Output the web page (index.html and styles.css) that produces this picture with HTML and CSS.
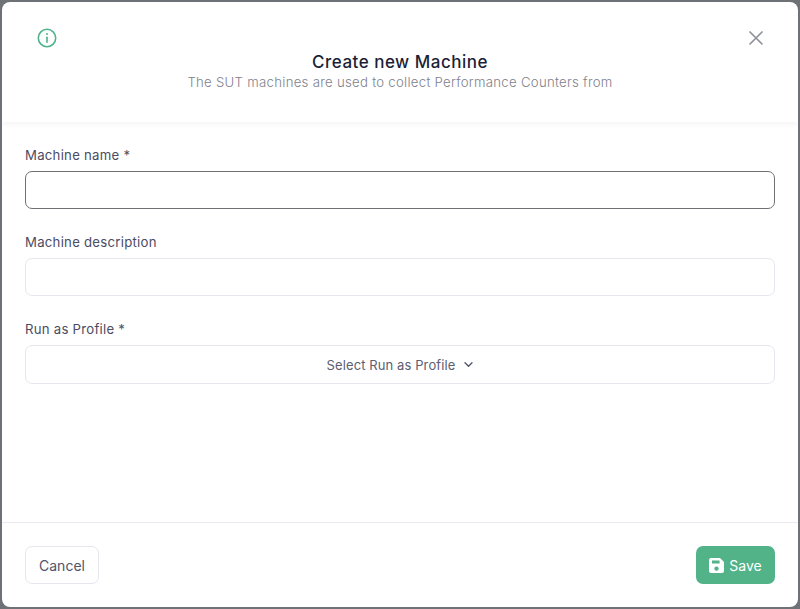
FILE: index.html
```html
<!DOCTYPE html>
<html lang="en">
<head>
<meta charset="utf-8">
<title>Create new Machine</title>
<link rel="stylesheet" href="styles.css">
</head>
<body>
<div class="modal">
  <header class="modal-header">
    <div class="header-icons">
      <svg class="info-icon" width="20" height="20" viewBox="0 0 20 20" fill="none" stroke="#4fb38a" stroke-width="1.6" stroke-linecap="round"><circle cx="10" cy="10" r="8.7"/><path d="M10 9.2v5"/><path d="M10 5.9v.1" stroke-width="2"/></svg>
      <svg class="close-icon" width="16" height="16" viewBox="0 0 16 16" fill="none" stroke="#8f929c" stroke-width="1.7" stroke-linecap="round"><path d="M2 2l12 12M14 2L2 14"/></svg>
    </div>
    <h1 class="title">Create new Machine</h1>
    <p class="subtitle">The SUT machines are used to collect Performance Counters from</p>
  </header>
  <main class="modal-body">
    <div class="field">
      <label class="field-label">Machine name *</label>
      <input class="text-input is-focused" type="text">
    </div>
    <div class="field">
      <label class="field-label">Machine description</label>
      <input class="text-input" type="text">
    </div>
    <div class="field">
      <label class="field-label">Run as Profile *</label>
      <button class="select-button" type="button">Select Run as Profile
        <svg width="9" height="5" viewBox="0 0 9 5" fill="none" stroke="#50536a" stroke-width="1.3" stroke-linecap="round" stroke-linejoin="round"><path d="M1 .8l3.5 3.4L8 .8"/></svg>
      </button>
    </div>
  </main>
  <footer class="modal-footer">
    <button class="btn btn-cancel" type="button">Cancel</button>
    <button class="btn btn-save" type="button">
      <svg width="15" height="15" viewBox="0 0 15 15"><path fill="#fff" fill-rule="evenodd" d="M2 0h9l4 4v9a2 2 0 0 1-2 2H2a2 2 0 0 1-2-2V2a2 2 0 0 1 2-2zM3 2.4v3.2h7.6V2.4zM7.5 8.4a2.2 2.2 0 1 0 0 4.4 2.2 2.2 0 0 0 0-4.4z"/></svg>
      Save
    </button>
  </footer>
</div>
</body>
</html>
```
FILE: styles.css
```css
* { box-sizing: border-box; }
html, body { height: 100%; }
body {
  margin: 0;
  padding: 2px;
  background: #6e7175;
  font-family: "Inter", "Liberation Sans", sans-serif;
  overflow: hidden;
}
.modal {
  height: 100%;
  background: #fff;
  border-radius: 8px;
  display: flex;
  flex-direction: column;
  overflow: hidden;
}
.modal-header {
  height: 120px;
  flex: none;
  padding: 25px 23px 0;
  text-align: center;
  box-shadow: 0 2px 5px rgba(30, 30, 60, 0.05);
  position: relative;
}
.header-icons {
  display: flex;
  justify-content: space-between;
  align-items: flex-start;
  padding: 1px 11px 0 12px;
  height: 23px;
}
.close-icon { margin: 2px 0 0; }
.title {
  margin: 0;
  font-size: 17px;
  line-height: 24px;
  letter-spacing: 0.5px;
  font-weight: 500;
  color: #1c1e37;
}
.subtitle {
  margin: 0;
  font-size: 13.2px;
  line-height: 16px;
  letter-spacing: 0.28px;
  font-weight: 300;
  color: #7f818c;
}
.modal-body {
  flex: 1;
  padding: 24px 23px 0;
  display: flex;
  flex-direction: column;
  gap: 24px;
}
.field { display: flex; flex-direction: column; }
.field-label {
  font-size: 13.2px;
  line-height: 18px;
  letter-spacing: 0.25px;
  margin-bottom: 7px;
  color: #4a4c63;
}
.text-input {
  height: 38px;
  border: 1px solid #e7e6f0;
  border-radius: 7px;
  background: #fff;
  outline: none;
  padding: 0 12px;
}
.text-input.is-focused { border-color: #6e7073; }
.select-button {
  height: 39px;
  border: 1px solid #e7e6f0;
  border-radius: 7px;
  background: #fff;
  font-family: inherit;
  font-size: 13px;
  letter-spacing: 0.1px;
  color: #5c5e72;
  display: flex;
  align-items: center;
  justify-content: center;
  gap: 9px;
}
.modal-footer {
  flex: none;
  height: 85px;
  padding: 23px 23px 0;
  border-top: 1px solid #ebeaf2;
  display: flex;
  justify-content: space-between;
  align-items: flex-start;
}
.btn {
  height: 38px;
  border-radius: 7px;
  font-family: inherit;
  font-size: 14px;
  display: flex;
  align-items: center;
  justify-content: center;
}
.btn-cancel {
  width: 74px;
  background: #fff;
  border: 1px solid #e7e6f0;
  color: #50536a;
}
.btn-save {
  width: 79px;
  background: #52b288;
  border: 0;
  color: #fff;
  gap: 5px;
}
```
